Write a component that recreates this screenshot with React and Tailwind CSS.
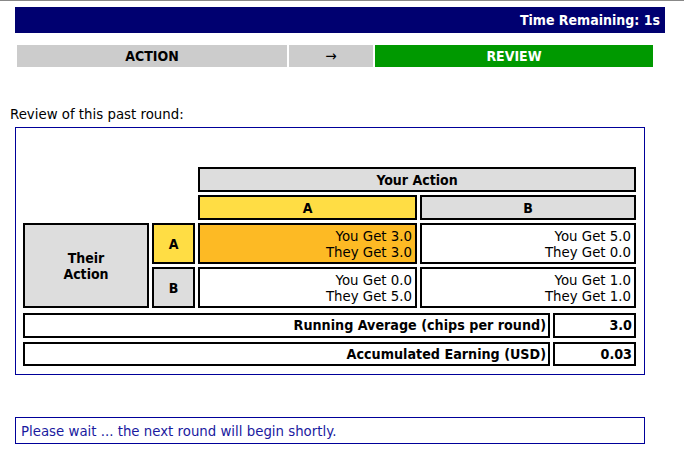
const font = { fontFamily: '"DejaVu Sans", Verdana, sans-serif' };
const bold = '[font-family:"DejaVu_Sans_Condensed","DejaVu_Sans",sans-serif] font-stretch-condensed font-bold';

function Cell({ className = "", children }) {
  return (
    <div
      className={`flex items-center justify-center border-2 border-black pt-[1px] text-[14px] ${bold} ${className}`}
    >
      {children}
    </div>
  );
}

function Payoff({ you, they, className = "bg-white" }) {
  return (
    <div
      className={`flex flex-col items-end border-2 border-black pr-[3px] pt-[4px] text-[13.33px] leading-[16px] ${className}`}
    >
      <span>You Get {you}</span>
      <span>They Get {they}</span>
    </div>
  );
}

export default function App() {
  return (
    <div
      className="h-[459px] w-[684px] overflow-hidden border-t border-[#888888] bg-white text-black"
      style={font}
    >
      <div className={`ml-[15px] mt-[6px] flex h-[26px] w-[650px] items-center justify-end bg-[#000070] pr-[5px] text-[14px] text-white ${bold}`}>
        Time Remaining: 1s
      </div>

      <div className={`ml-[17px] mt-[12px] flex h-[22px] gap-[2px] text-[14px] ${bold}`}>
        <div className="flex w-[270px] items-center justify-center bg-[#cccccc]">ACTION</div>
        <div className="flex w-[84px] items-center justify-center bg-[#cccccc] text-[15px] font-normal">→</div>
        <div className="flex w-[278px] items-center justify-center bg-[#009900] text-white">REVIEW</div>
      </div>

      <div className="ml-[10px] mt-[40px] text-[13.33px] leading-[16px]">Review of this past round:</div>

      <div className="ml-[15px] mt-[4px] h-[248px] w-[630px] border border-[#000099] pl-[7px] pt-[39px]">
        <div className="grid grid-cols-[126px_43px_219px_216px] grid-rows-[25px_25px_41px_41px] gap-[3px]">
          <Cell className="col-start-3 col-span-2 bg-[#dddddd]">Your Action</Cell>
          <Cell className="col-start-3 bg-[#ffdd44]">A</Cell>
          <Cell className="bg-[#dddddd]">B</Cell>
          <Cell className="row-span-2 bg-[#dddddd] text-center leading-[16px]">
            Their
            <br />
            Action
          </Cell>
          <Cell className="bg-[#ffdd44]">A</Cell>
          <Payoff you="3.0" they="3.0" className="bg-[#fdba24]" />
          <Payoff you="5.0" they="0.0" />
          <Cell className="bg-[#dddddd]">B</Cell>
          <Payoff you="0.0" they="5.0" />
          <Payoff you="1.0" they="1.0" />
        </div>

        <div className={`mt-[5px] flex h-[25px] gap-[3px] text-[14.2px] ${bold}`}>
          <div className="flex w-[527px] items-center justify-end border-2 border-black pr-[2px] pt-[1px]">
            Running Average (chips per round)
          </div>
          <div className="flex w-[83px] items-center justify-end border-2 border-black pr-[2px] pt-[1px]">3.0</div>
        </div>
        <div className={`mt-[4px] flex h-[24px] gap-[3px] text-[14.2px] ${bold}`}>
          <div className="flex w-[527px] items-center justify-end border-2 border-black pr-[2px] pt-[1px]">
            Accumulated Earning (USD)
          </div>
          <div className="flex w-[83px] items-center justify-end border-2 border-black pr-[2px] pt-[1px]">0.03</div>
        </div>
      </div>

      <div className="ml-[15px] mt-[42px] flex h-[27px] w-[630px] items-center border border-[#000099] pl-[5px] pt-[2px] text-[13.33px] text-[#1a1aa0]">
        Please wait ... the next round will begin shortly.
      </div>
    </div>
  );
}
